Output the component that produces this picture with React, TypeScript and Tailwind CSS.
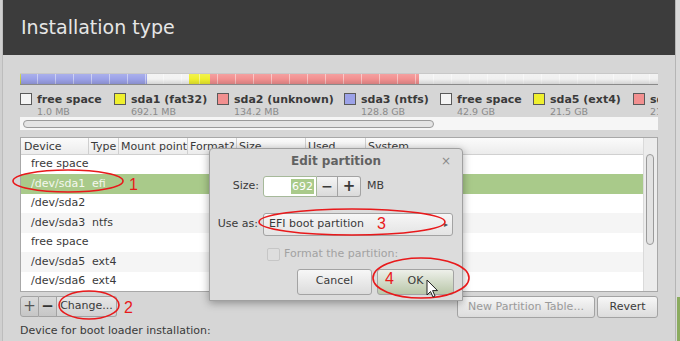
const legend = [
  { name: "free space", size: "1.0 MB", sw: "bg-[#f4f4f4]", w: "w-[94px]" },
  { name: "sda1 (fat32)", size: "692.1 MB", sw: "bg-[#efef2e]", w: "w-[103px]" },
  { name: "sda2 (unknown)", size: "134.2 MB", sw: "bg-[#f29090]", w: "w-[127px]" },
  { name: "sda3 (ntfs)", size: "128.8 GB", sw: "bg-[#9ca2e8]", w: "w-[96px]" },
  { name: "free space", size: "42.9 GB", sw: "bg-[#f4f4f4]", w: "w-[93px]" },
  { name: "sda5 (ext4)", size: "21.5 GB", sw: "bg-[#efef2e]", w: "w-[100px]" },
  { name: "sda6 (ext4)", size: "21.5 GB", sw: "bg-[#f29090]", w: "w-[100px]" },
];

const rows = [
  { dev: "free space", type: "" },
  { dev: "/dev/sda1", type: "efi" },
  { dev: "/dev/sda2", type: "" },
  { dev: "/dev/sda3", type: "ntfs" },
  { dev: "free space", type: "" },
  { dev: "/dev/sda5", type: "ext4" },
  { dev: "/dev/sda6", type: "ext4" },
];

const btn =
  "flex items-center justify-center border border-[#a3a3a3] rounded-[3px] bg-gradient-to-b from-[#f7f7f7] to-[#dcdcdc] text-[11px] text-[#3a3a3a]";

export default function App() {
  return (
    <div className="relative w-[680px] h-[341px] overflow-hidden flex bg-[#d6d6d6] font-['DejaVu_Sans',sans-serif] text-[#3a3a3a]">
      {/* left edge */}
      <div className="w-[3px] bg-[#d0d0d0] border-r border-[#bdbdbd]" />

      {/* installer window */}
      <div className="w-[672px] flex flex-col">
        <div className="h-[55px] bg-[#3c3c3c] pl-[18px] pt-[15px]">
          <h1 className="text-[19px] leading-[24px] text-[#e6e6e6]">Installation type</h1>
        </div>

        <div className="pl-[17px] pt-[18px] w-[655px]">
          {/* partition bar */}
          <div className="relative h-[12px] w-[638px] flex border-b border-[#8a8a8a] border-t border-t-[#c8c8c8] overflow-hidden">
            <div className="w-[1px] bg-[#c8d040]" />
            <div className="w-[126px] bg-[#9ca2e8]" />
            <div className="w-[42px] bg-[#f2f2f2]" />
            <div className="w-[21px] bg-[#efef2e]" />
            <div className="w-[209px] bg-[#f29090]" />
            <div className="flex-1 bg-[#f0f0f0]" />
            <div className="absolute inset-0 bg-[repeating-linear-gradient(90deg,transparent_0,transparent_17px,rgba(255,255,255,0.45)_17px,rgba(255,255,255,0.45)_18px)]" />
            <div className="absolute inset-0 bg-gradient-to-b from-[rgba(255,255,255,0.15)] via-transparent to-[rgba(0,0,0,0.12)]" />
          </div>

          {/* legend */}
          <div className="mt-[8px] h-[24px] w-[638px] flex overflow-hidden">
            {legend.map((l, i) => (
              <div key={i} className={`${l.w} shrink-0 flex gap-[5px] overflow-hidden`}>
                <div className={`w-[12px] h-[12px] border border-[#5a5a5a] ${l.sw} shrink-0`} />
                <div className="whitespace-nowrap">
                  <div className="text-[11px] leading-[13px] font-bold text-[#3a3a3a]">{l.name}</div>
                  <div className="text-[9.5px] leading-[11px] text-[#8a8a8a]">{l.size}</div>
                </div>
              </div>
            ))}
          </div>

          {/* horizontal scrollbar */}
          <div className="h-[13px] w-[638px] bg-[#f6f6f6] pt-[3px] pl-[3px]">
            <div className="h-[8px] w-[411px] rounded-full border border-[#9a9a9a] bg-[#e4e4e4]" />
          </div>

          {/* partition table */}
          <div className="mt-[7px] w-[638px] h-[155px] border border-[#a8a8a8] flex bg-white">
            <div className="flex-1 flex flex-col">
              <div className="h-[17px] flex text-[11px] leading-[17px] whitespace-nowrap bg-gradient-to-b from-[#fbfbfb] to-[#ececec] border-b border-[#d0d0d0]">
                <div className="w-[68px] pl-[3px] border-r border-[#cfcfcf]">Device</div>
                <div className="w-[30px] pl-[2px] border-r border-[#cfcfcf] overflow-hidden">Type</div>
                <div className="w-[69px] pl-[2px] border-r border-[#cfcfcf] overflow-hidden">Mount point</div>
                <div className="w-[49px] pl-[2px] border-r border-[#cfcfcf] overflow-hidden">Format?</div>
                <div className="w-[69px] pl-[2px] border-r border-[#cfcfcf]">Size</div>
                <div className="w-[60px] pl-[2px] border-r border-[#cfcfcf]">Used</div>
                <div className="flex-1 pl-[2px]">System</div>
              </div>
              {rows.map((r, i) => (
                <div
                  key={i}
                  className={`h-[19.5px] flex items-center text-[11px] ${
                    i === 1 ? "bg-[#a9ca8a] text-[#f4f7ef]" : i % 2 === 1 ? "bg-[#f5f5f5]" : "bg-white"
                  }`}
                >
                  <div className="w-[68px] pl-[10px] whitespace-nowrap">{r.dev}</div>
                  <div className="pl-[3px]">{r.type}</div>
                </div>
              ))}
            </div>
            <div className="w-[14px] bg-[#ececec] border-l border-[#dadada] pt-[16px] pl-[2px]">
              <div className="w-[8px] h-[91px] rounded-full border border-[#9a9a9a] bg-[#e2e2e2]" />
            </div>
          </div>

          {/* buttons below table */}
          <div className="mt-[4px] h-[21px] w-[638px] flex">
            <div className="flex">
              <div className="w-[19px] h-[21px] flex items-center justify-center border border-[#a3a3a3] rounded-l-[3px] bg-gradient-to-b from-[#dadada] to-[#c6c6c6] text-[15px] text-[#555]">+</div>
              <div className="w-[18px] h-[21px] flex items-center justify-center border-y border-r border-[#a3a3a3] bg-gradient-to-b from-[#dadada] to-[#c6c6c6] text-[15px] font-bold text-[#333]">−</div>
              <div className="w-[60px] h-[21px] flex items-center justify-center border-y border-r border-[#a3a3a3] rounded-r-[3px] bg-gradient-to-b from-[#e6e6e6] to-[#d2d2d2] text-[11px]">Change...</div>
            </div>
            <div className="flex-1" />
            <div className={`${btn} w-[138px] h-[22px] text-[#9a9a9a]`}>New Partition Table...</div>
            <div className={`${btn} w-[61px] h-[22px] ml-[2px]`}>Revert</div>
          </div>

          <div className="mt-[7px] text-[11px] leading-[13px]">Device for boot loader installation:</div>
        </div>
      </div>

      {/* right edge */}
      <div className="flex-1 flex flex-col border-l border-[#b5b5b5] bg-[#d9d9d9]">
        <div className="flex-1" />
        <div className="h-[44px] ml-[1px] bg-[#8bab5f]" />
      </div>

      {/* Edit partition dialog */}
      <div className="absolute left-[209px] top-[148px] w-[254px] h-[153px] bg-[#dcdcdc] border border-[#a0a0a0] rounded-t-[4px] shadow-[0_2px_8px_rgba(0,0,0,0.35)] flex flex-col">
        <div className="h-[24px] relative flex items-center justify-center">
          <span className="text-[12px] font-bold text-[#626262]">Edit partition</span>
          <span className="absolute right-[11px] top-[3px] text-[12px] text-[#8a8a8a]">×</span>
        </div>
        <div className="mt-[3px] h-[21px] flex items-center">
          <span className="w-[53px] text-right pr-[4px] text-[11px]">Size:</span>
          <div className="w-[54px] h-[21px] border border-[#a6b99a] rounded-l-[3px] bg-white flex items-center justify-end pr-[2px]">
            <span className="bg-[#a9ca8a] text-white text-[11px] leading-[15px] px-[1px]">692</span>
          </div>
          <div className="w-[21px] h-[21px] flex items-center justify-center border-y border-r border-[#a3a3a3] bg-gradient-to-b from-[#f5f5f5] to-[#dadada] text-[14px] font-bold">−</div>
          <div className="w-[23px] h-[21px] flex items-center justify-center border-y border-r border-[#a3a3a3] rounded-r-[3px] bg-gradient-to-b from-[#f5f5f5] to-[#dadada] text-[15px] font-bold">+</div>
          <span className="ml-[6px] text-[11px]">MB</span>
        </div>
        <div className="mt-[16px] h-[23px] flex items-center">
          <span className="w-[53px] text-right pr-[5px] text-[11px]">Use as:</span>
          <div className="w-[190px] h-[23px] border border-[#a3a3a3] rounded-[3px] bg-gradient-to-b from-[#f6f6f6] to-[#e4e4e4] flex items-center pl-[5px] pr-[4px]">
            <span className="flex-1 text-[11px]">EFI boot partition</span>
            <span className="text-[8px] text-[#555]">▸</span>
          </div>
        </div>
        <div className="mt-[10px] flex items-center pl-[57px] gap-[4px]">
          <div className="w-[13px] h-[13px] border border-[#c6c6c6] rounded-[2px] bg-[#dedede]" />
          <span className="text-[11px] text-[#a2a2a2]">Format the partition:</span>
        </div>
        <div className="mt-[6px] flex pl-[87px] gap-[5px]">
          <div className={`${btn} w-[75px] h-[26px]`}>Cancel</div>
          <div className="w-[77px] h-[26px] flex items-center justify-center border border-[#a3a3a3] rounded-[3px] bg-gradient-to-b from-[#eef0ea] to-[#b9c7a9] text-[11px]">OK</div>
        </div>
      </div>

      {/* annotations */}
      <svg className="absolute inset-0 pointer-events-none" width="680" height="341" viewBox="0 0 680 341">
        <g fill="none" stroke="#e8191b" strokeWidth="1.6">
          <ellipse cx="68" cy="181" rx="55" ry="11" />
          <ellipse cx="89" cy="305" rx="30" ry="14" />
          <ellipse cx="352" cy="222" rx="93" ry="13" />
          <ellipse cx="421" cy="278" rx="48" ry="20" />
        </g>
        <g fill="#e8191b" fontFamily="Liberation Sans, sans-serif" fontSize="16">
          <text x="129" y="190">1</text>
          <text x="124" y="313">2</text>
          <text x="377" y="229">3</text>
          <text x="385" y="284">4</text>
        </g>
        <path d="M427 280 L427 295 L430.5 291.5 L433 297 L435 296 L432.6 290.6 L437.5 290.6 Z" fill="#fff" stroke="#222" strokeWidth="1" strokeLinejoin="round" />
      </svg>
    </div>
  );
}
